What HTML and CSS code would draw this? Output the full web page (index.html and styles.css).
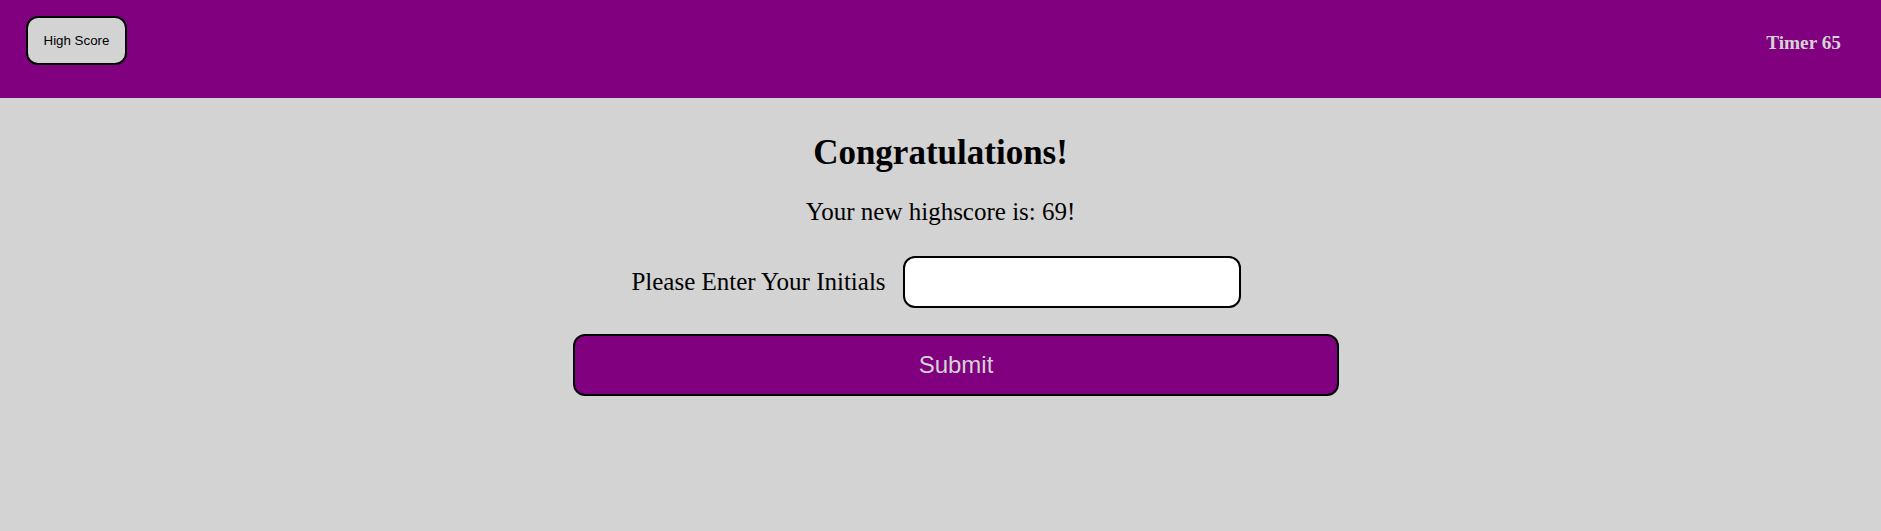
FILE: index.html
```html
<!DOCTYPE html>
<html lang="en">
<head>
<meta charset="utf-8">
<title>Quiz</title>
<link rel="stylesheet" href="styles.css">
</head>
<body>
<header class="topbar">
  <button class="hs-btn" type="button">High Score</button>
  <h3 class="timer">Timer 65</h3>
</header>
<main class="result">
  <h2 class="congrats">Congratulations!</h2>
  <p class="score">Your new highscore is: 69!</p>
  <form class="entry">
    <div class="entry-row">
      <label class="entry-label" for="initials">Please Enter Your Initials</label>
      <input class="entry-input" id="initials" type="text">
    </div>
    <button class="submit-btn" type="button">Submit</button>
  </form>
</main>
</body>
</html>
```
FILE: styles.css
```css
html, body {
  margin: 0;
  padding: 0;
}
body {
  background: #d3d3d3;
  font-family: "Liberation Serif", "Times New Roman", serif;
  color: #000;
  width: 1881px;
  height: 531px;
  overflow: hidden;
}
.topbar {
  height: 98px;
  box-sizing: border-box;
  background: #800080;
  display: flex;
  justify-content: space-between;
  align-items: flex-start;
  padding: 16px 40px 0 26px;
}
.hs-btn {
  font-family: "Liberation Sans", Arial, sans-serif;
  font-size: 13.33px;
  line-height: 15px;
  padding: 15px 15.5px;
  border: 2px solid #000;
  border-radius: 12px;
  background: #d3d3d3;
  color: #000;
  margin: 0;
}
.timer {
  margin: 16px 0 0 0;
  font-size: 19.3px;
  font-weight: bold;
  color: #d3d3d3;
}
.result {
  display: flex;
  flex-direction: column;
  align-items: center;
}
.congrats {
  margin: 35px 0 0 0;
  font-size: 35px;
  font-weight: bold;
}
.score {
  margin: 24.5px 0 0 0;
  font-size: 25px;
}
.entry {
  display: flex;
  flex-direction: column;
  align-items: center;
  margin-top: 30.5px;
}
.entry-row {
  display: flex;
  align-items: center;
  gap: 17px;
  margin-right: 9px;
}
.entry-label {
  font-size: 25px;
}
.entry-input {
  box-sizing: border-box;
  width: 338px;
  height: 52px;
  border: 2px solid #000;
  border-radius: 12px;
  background: #fff;
  margin: 0;
  padding: 0 10px;
  font-size: 20px;
}
.submit-btn {
  box-sizing: border-box;
  width: 766px;
  height: 62px;
  margin: 26px 0 0 31px;
  border: 2px solid #000;
  border-radius: 12px;
  background: #800080;
  color: #d3d3d3;
  font-family: "Liberation Sans", Arial, sans-serif;
  font-size: 24px;
  padding: 0;
}
```
